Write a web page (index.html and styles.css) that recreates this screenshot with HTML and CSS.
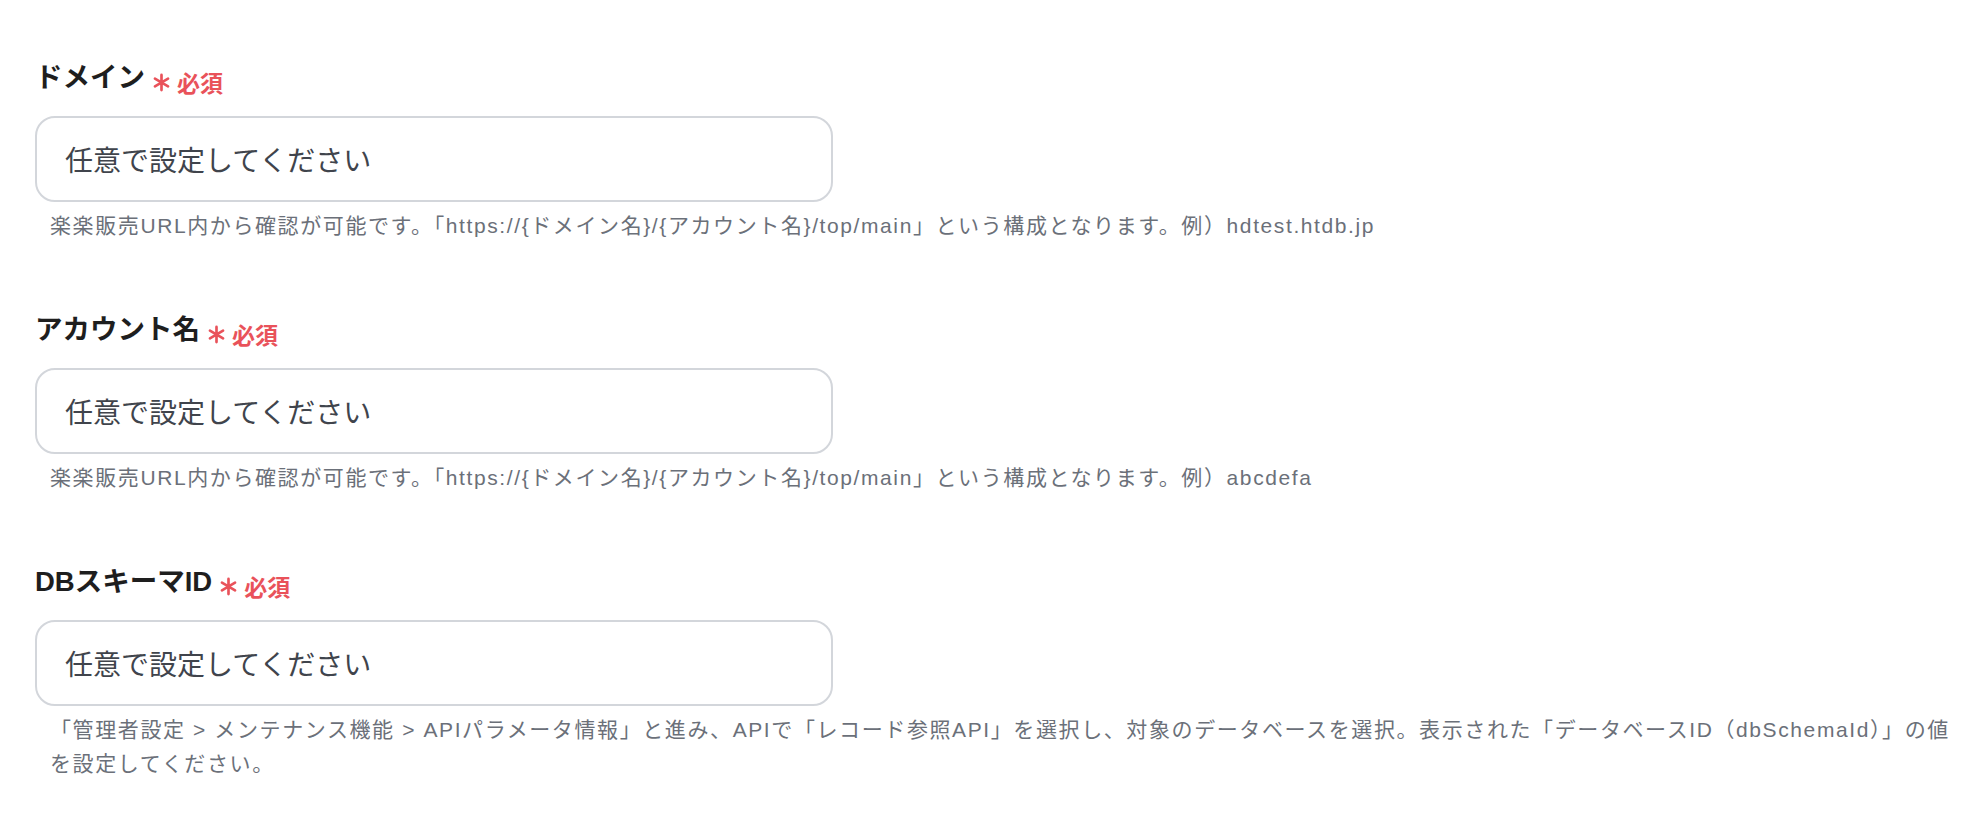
FILE: index.html
```html
<!DOCTYPE html>
<html lang="ja">
<head>
<meta charset="utf-8">
<title>設定</title>
<link rel="stylesheet" href="styles.css">
</head>
<body>
<form class="form">
  <div class="field">
    <label class="label">ドメイン<span class="req"><svg class="ast" viewBox="0 0 20 20"><path d="M10 2v16M3.1 6l13.8 8M3.1 14l13.8-8"/></svg>必須</span></label>
    <div class="input">任意で設定してください</div>
    <p class="desc">楽楽販売URL内から確認が可能です。「https://{ドメイン名}/{アカウント名}/top/main」という構成となります。例）hdtest.htdb.jp</p>
  </div>
  <div class="field">
    <label class="label">アカウント名<span class="req"><svg class="ast" viewBox="0 0 20 20"><path d="M10 2v16M3.1 6l13.8 8M3.1 14l13.8-8"/></svg>必須</span></label>
    <div class="input">任意で設定してください</div>
    <p class="desc">楽楽販売URL内から確認が可能です。「https://{ドメイン名}/{アカウント名}/top/main」という構成となります。例）abcdefa</p>
  </div>
  <div class="field">
    <label class="label">DBスキーマID<span class="req"><svg class="ast" viewBox="0 0 20 20"><path d="M10 2v16M3.1 6l13.8 8M3.1 14l13.8-8"/></svg>必須</span></label>
    <div class="input">任意で設定してください</div>
    <p class="desc">「管理者設定 &gt; メンテナンス機能 &gt; APIパラメータ情報」と進み、APIで「レコード参照API」を選択し、対象のデータベースを選択。表示された「データベースID（dbSchemaId）」の値<br>を設定してください。</p>
  </div>
</form>
</body>
</html>
```

FILE: styles.css
```css
html, body {
  margin: 0;
  background: #ffffff;
}
body {
  font-family: "Noto Sans CJK JP", "Noto Sans", sans-serif;
  color: #1f1f1f;
}
.form {
  padding: 60px 0 0 35px;
  width: 1980px;
  box-sizing: border-box;
}
.field {
  display: flex;
  flex-direction: column;
  margin-bottom: 69px;
}
.label {
  display: flex;
  align-items: center;
  font-family: "Liberation Sans", "Noto Sans CJK JP", sans-serif;
  font-size: 27.5px;
  font-weight: 700;
  line-height: 36px;
  height: 36px;
  color: #1e1e1e;
}
.req {
  display: inline-flex;
  align-items: center;
  margin-left: 7px;
  font-family: "Noto Sans CJK JP", sans-serif;
  font-size: 23px;
  font-weight: 700;
  color: #e9525a;
  padding-top: 8px;
}
.ast {
  width: 19px;
  height: 19px;
  margin-right: 6px;
  fill: none;
  stroke: #e9525a;
  stroke-width: 2.8;
  stroke-linecap: round;
}
.input {
  margin-top: 20px;
  width: 798px;
  height: 86px;
  box-sizing: border-box;
  border: 2px solid #d3d6db;
  border-radius: 20px;
  padding: 0 28px;
  display: flex;
  align-items: center;
  font-size: 28px;
  color: #40444c;
}
.desc {
  margin: 7px 0 0;
  padding-left: 15px;
  font-family: "Liberation Sans", "Noto Sans CJK JP", sans-serif;
  font-size: 21px;
  letter-spacing: 1.6px;
  line-height: 34px;
  color: #6b7079;
}
```
